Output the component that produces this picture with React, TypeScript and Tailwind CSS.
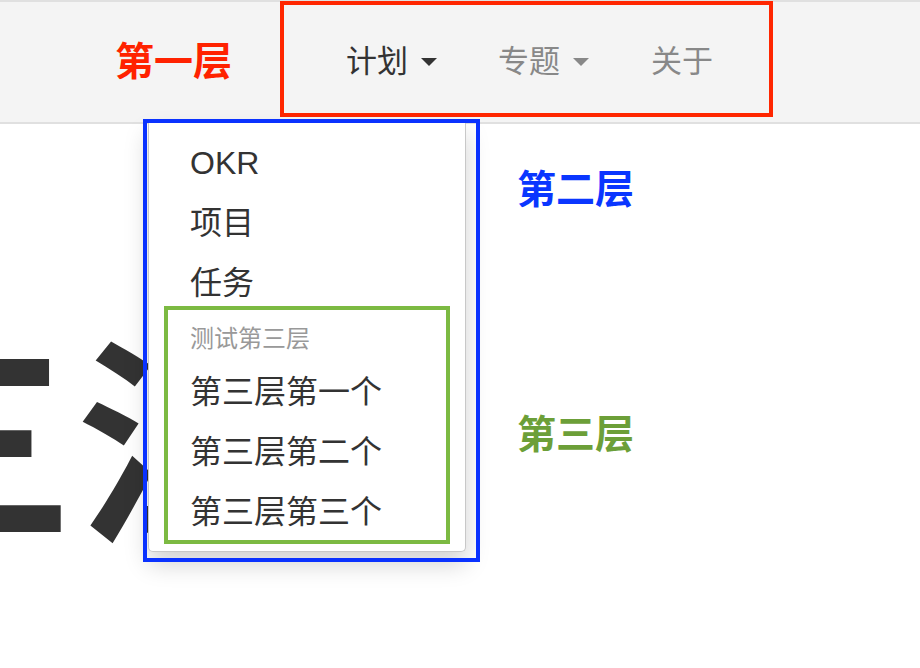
import React from 'react';

const font = 'font-["Liberation_Sans","Noto_Sans_CJK_SC",sans-serif]';

const Caret = ({ color }: { color: string }) => (
  <span className={`ml-[13px] inline-block h-0 w-0 border-x-[8px] border-t-[8px] border-x-transparent ${color}`} />
);

const App = () => {
  return (
    <div className={`relative h-[668px] w-[920px] overflow-hidden bg-white ${font}`}>
      {/* 导航栏 */}
      <header className="flex h-[124px] items-start border-y-2 border-[#e0e0e0] bg-[#f4f4f4]">
        <div className="flex h-[118px] w-[280px] items-center pl-[115px] pt-[2px] text-[39px] font-bold text-[#ff2200]">
          第一层
        </div>
        <ul className="-mt-[1px] flex h-[116px] w-[493px] items-center border-4 border-[#ff2600] pl-[62px] pt-[6px] text-[31px]">
          <li className="flex items-center text-[#333]">
            计划
            <Caret color="border-t-[#333]" />
          </li>
          <li className="ml-[61px] flex items-center text-[#888]">
            专题
            <Caret color="border-t-[#888]" />
          </li>
          <li className="ml-[62px] text-[#888]">关于</li>
        </ul>
      </header>

      {/* 背景大字 */}
      <div className="-ml-[145px] mt-[216px] text-[220px] font-bold leading-none text-[#333]">三江</div>

      {/* 下拉菜单 */}
      <div className="absolute left-[148px] top-[122px] h-[430px] w-[318px] rounded-b-[5px] border border-t-0 border-[#c8c8c8] bg-white pt-[11px] shadow-[0_12px_24px_rgba(0,0,0,0.18)]">
        <ul className="text-[32px] text-[#333]">
          <li className="flex h-[60px] items-center px-[41px]">OKR</li>
          <li className="flex h-[60px] items-center px-[41px]">项目</li>
          <li className="flex h-[60px] items-center px-[41px]">任务</li>
        </ul>
        <div className="flex h-[49px] items-center px-[41px] pt-[2px] text-[24px] text-[#999]">测试第三层</div>
        <ul className="text-[32px] text-[#333]">
          <li className="flex h-[60px] items-center px-[41px]">第三层第一个</li>
          <li className="flex h-[60px] items-center px-[41px]">第三层第二个</li>
          <li className="flex h-[60px] items-center px-[41px]">第三层第三个</li>
        </ul>
      </div>

      {/* 标注 */}
      <div className="absolute left-[143px] top-[119px] h-[443px] w-[337px] border-4 border-[#0a32ff]" />
      <div className="absolute left-[164px] top-[306px] h-[238px] w-[286px] border-4 border-[#7cba42]" />
      <div className="absolute left-[517px] top-[168px] text-[39px] font-bold leading-[44px] text-[#0a36ff]">第二层</div>
      <div className="absolute left-[517px] top-[413px] text-[39px] font-bold leading-[44px] text-[#6c9f38]">第三层</div>
    </div>
  );
};

export default App;
